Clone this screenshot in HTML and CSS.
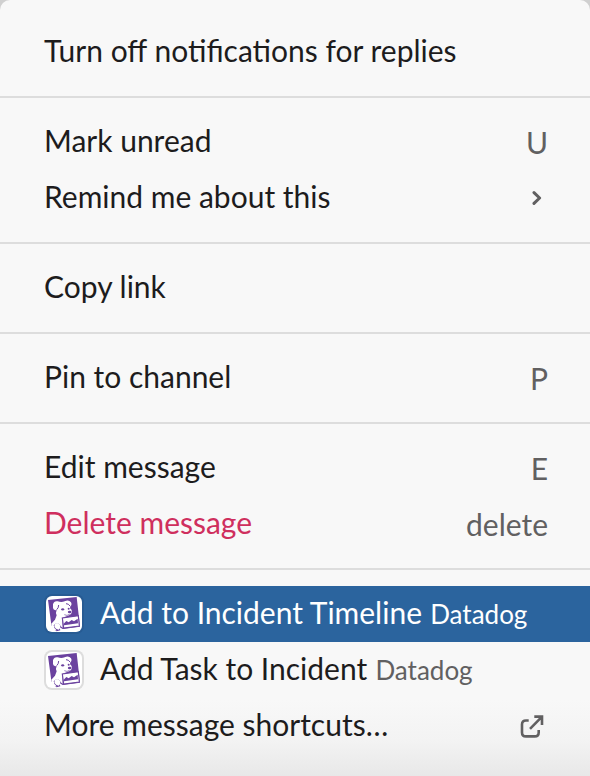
FILE: index.html
```html
<!DOCTYPE html>
<html lang="en">
<head>
<meta charset="utf-8">
<title>Message actions</title>
<link rel="stylesheet" href="styles.css">
</head>
<body>
<svg class="defs" aria-hidden="true">
  <symbol id="dog" viewBox="30 29 108 108">
    <path fill="#6b429f" d="M36 41 L122 32 L132 121 L80 128 L70 122 L73 132 L62 135 L52 129 L46 115 Z"/>
    <path fill="#fff" d="M51 54 Q54 43 65 45 Q76 49 86 45 Q98 39 105 48 Q109 56 103 60 L102 66 Q110 72 107 80 Q103 87 96 88 L79 94 L80 124 Q74 121 72 116 Q67 109 61 110 L53 117 Q53 126 62 132 L50 134 L46 112 L57 100 L62 87 Q58 79 62 71 Q52 73 51 65 Z"/>
    <path fill="none" stroke="#6b429f" stroke-width="3" d="M62 70 Q68 65 68 56 M90 52 Q98 52 102 59"/>
    <ellipse cx="80" cy="69" rx="4.5" ry="3.5" fill="#6b429f"/>
    <ellipse cx="98" cy="67" rx="3" ry="3" fill="#6b429f"/>
    <ellipse cx="101" cy="77" rx="5.5" ry="4" fill="#6b429f"/>
    <path fill="none" stroke="#6b429f" stroke-width="2" d="M85 85 Q93 90 101 84"/>
    <path fill="#fff" stroke="#6b429f" stroke-width="3.5" d="M79 95 L127 88 L130 119 L83 125 Z"/>
    <path fill="#6b429f" d="M83 112 L91 104 L98 108 L107 101 L114 105 L125 97 L126 111 L84 117 Z"/>
    <path fill="#fff" d="M57 112 Q67 107 72 117 Q75 126 68 130 Q59 130 55 120 Z"/>
  </symbol>
</svg>
<div class="menu" role="menu">
  <section class="group">
    <div class="item"><span>Turn off notifications for replies</span></div>
  </section>
  <section class="group">
    <div class="item"><span>Mark unread</span><span class="key">U</span></div>
    <div class="item"><span>Remind me about this</span>
      <svg class="chevron" viewBox="0 0 12 18"><path d="M2 3.6 L7.6 9 L2 14.4"/></svg>
    </div>
  </section>
  <section class="group">
    <div class="item"><span>Copy link</span></div>
  </section>
  <section class="group">
    <div class="item"><span>Pin to channel</span><span class="key">P</span></div>
  </section>
  <section class="group">
    <div class="item"><span>Edit message</span><span class="key">E</span></div>
    <div class="item danger"><span>Delete message</span><span class="key">delete</span></div>
  </section>
  <section class="group">
    <div class="item selected"><svg class="app"><use href="#dog"/></svg><span>Add to Incident Timeline <small>Datadog</small></span></div>
    <div class="item"><svg class="app"><use href="#dog"/></svg><span>Add Task to Incident <small>Datadog</small></span></div>
    <div class="item"><span>More message shortcuts…</span>
      <svg class="external" viewBox="0 0 24 24"><path d="M8.7 6.5 H6 Q2 6.5 2 10.5 V18.4 Q2 22.4 6 22.4 H14.7 Q18.7 22.4 18.7 18.4 V16 M14.3 2.6 H22 V11 M22 2.6 L10 14.8"/></svg>
    </div>
  </section>
</div>
</body>
</html>
```
FILE: styles.css
```css
* { box-sizing: border-box; }
body { margin: 0; background: #d0d0d0; overflow: hidden; }
.defs { display: none; }
.menu {
  height: 776px;
  padding-top: 8px;
  border-radius: 10px 10px 0 0;
  background: linear-gradient(#f8f8f8 0, #f8f8f8 700px, #f3f3f3 740px, #e8e8e8 776px);
  color: #1d1c1d;
  font: 30px/56px Lato, Carlito, sans-serif;
}
.group { padding: 16px 0; }
.group + .group { border-top: 2px solid #dddddd; }
.item {
  display: flex;
  align-items: center;
  height: 56px;
  padding: 0 42px 0 44px;
  white-space: nowrap;
}
.item > span { margin-top: -4px; }
.item > .app + span { margin-top: -2px; }
.key {
  margin-left: auto;
  padding-top: 3px;
  color: #616061;
}
.danger { color: #cf2f5e; }
.app {
  flex: none;
  width: 36px;
  height: 36px;
  margin: 0 18px 0 2px;
  border-radius: 6px;
  background: #fff;
  box-shadow: 0 0 0 2px #dddddd;
}
small { margin-left: 0.5px; color: #616061; font-size: 26px; }
.selected { background: #2b649e; color: #fff; }
.selected small { color: #fff; }
.selected .app { box-shadow: 0 0 0 2px #275b93; }
.chevron, .external {
  margin-left: auto;
  fill: none;
  stroke: #616061;
}
.chevron { width: 12px; height: 18px; margin-right: 4px; stroke-width: 3; stroke-linecap: round; stroke-linejoin: round; }
.external { width: 24px; height: 24px; margin-right: 4px; stroke-width: 2.6; }
```
